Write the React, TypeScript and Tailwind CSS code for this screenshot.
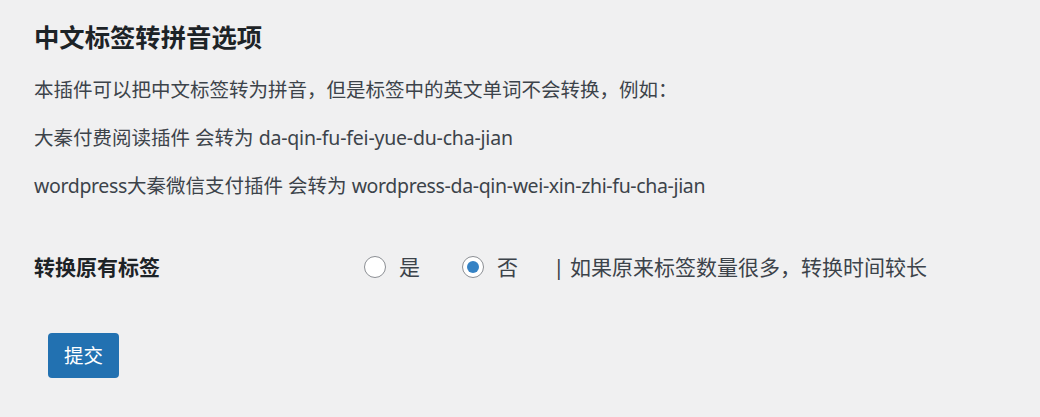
export default function App() {
  const font = '"Noto Sans", "Noto Sans CJK SC", sans-serif';

  return (
    <div
      className="min-h-[417px] w-full bg-[#f0f0f1] pl-[34px] pt-[19px] text-[#3c434a]"
      style={{ fontFamily: font }}
    >
      <h2 className="text-[25.35px] font-bold leading-[36px] text-[#1d2327]">
        中文标签转拼音选项
      </h2>

      <div className="mt-[20px] flex flex-col gap-[19px] text-[19.5px] leading-[29px]">
        <p>本插件可以把中文标签转为拼音，但是标签中的英文单词不会转换，例如：</p>
        <p>
          大秦付费阅读插件 会转为 <span className="tracking-[-0.2px]">da-qin-fu-fei-yue-du-cha-jian</span>
        </p>
        <p>
          <span className="tracking-[-0.35px]">wordpress</span>大秦微信支付插件 会转为{' '}
          <span className="tracking-[-0.35px]">wordpress-da-qin-wei-xin-zhi-fu-cha-jian</span>
        </p>
      </div>

      {/* option row */}
      <div className="mt-[52px] flex items-center text-[21px] leading-[30px]">
        <div className="w-[330px] font-bold text-[#1d2327]">转换原有标签</div>
        <label className="flex items-center">
          <span className="h-[22px] w-[22px] rounded-full border border-[#8c8f94] bg-white" />
          <span className="ml-[13px]">是</span>
        </label>
        <label className="ml-[42px] flex items-center">
          <span className="flex h-[22px] w-[22px] items-center justify-center rounded-full border border-[#8c8f94] bg-white">
            <span className="h-[12px] w-[12px] rounded-full bg-[#3582c4]" />
          </span>
          <span className="ml-[13px]">否</span>
        </label>
        <span className="ml-[35px]">| 如果原来标签数量很多，转换时间较长</span>
      </div>

      <div className="mt-[51px] pl-[14px]">
        <button className="h-[45px] w-[71px] rounded-[4px] bg-[#2271b1] text-[19.5px] text-white">
          提交
        </button>
      </div>
    </div>
  );
}
